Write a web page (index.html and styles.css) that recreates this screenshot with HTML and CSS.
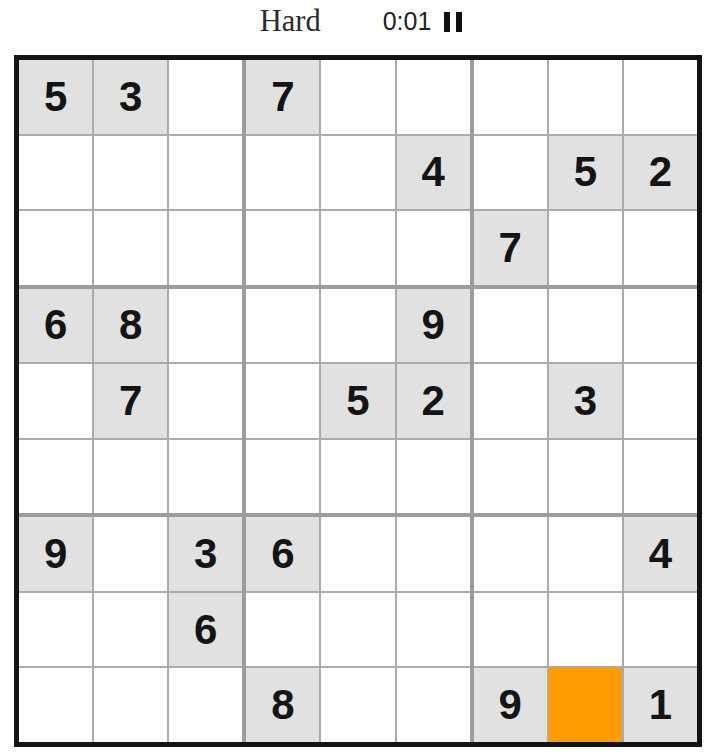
FILE: index.html
```html
<!DOCTYPE html>
<html lang="en">
<head>
<meta charset="utf-8">
<title>Sudoku</title>
<link rel="stylesheet" href="styles.css">
</head>
<body>
<div class="page">
  <header class="header">
    <span class="level">Hard</span>
    <span class="timer">0:01</span>
    <button class="pause" aria-label="Pause"><span class="bar"></span><span class="bar"></span></button>
  </header>
  <div class="board" id="board"></div>
</div>
<script src="app.js"></script>
</body>
</html>
```
FILE: styles.css
```css
html, body {
  margin: 0;
  padding: 0;
  background: #fff;
}
.page {
  width: 720px;
  padding-left: 14px;
  box-sizing: border-box;
}
.header {
  height: 43px;
  margin-bottom: 12px;
  display: flex;
  justify-content: center;
  align-items: center;
  color: #222;
}
.level {
  font-family: "Liberation Serif", "Times New Roman", serif;
  font-size: 30.5px;
  margin-right: 62px;
  margin-left: -12px;
  color: #2a2a2a;
}
.timer {
  font-family: "Liberation Sans", Arial, sans-serif;
  font-size: 25px;
  margin-right: 13px;
  color: #222;
}
.pause {
  display: flex;
  gap: 6px;
  padding: 0;
  margin: 1px 0 0 0;
  border: 0;
  background: none;
  height: 20px;
}
.bar {
  width: 6px;
  height: 20px;
  background: #111;
}
.board {
  box-sizing: border-box;
  width: 688px;
  height: 692px;
  border: 5px solid #141414;
  background: #9c9c9c;
  display: grid;
  grid-template-columns: repeat(3, 1fr);
  grid-template-rows: repeat(3, 1fr);
  gap: 4px;
}
.box {
  display: grid;
  grid-template-columns: repeat(3, 1fr);
  grid-template-rows: repeat(3, 1fr);
  gap: 2px;
  background: #ababab;
}
.cell {
  background: #fff;
  display: flex;
  align-items: center;
  justify-content: center;
  font-family: "Liberation Sans", Arial, sans-serif;
  font-weight: 700;
  font-size: 42px;
  color: #141414;
}
.cell.given {
  background: #e1e1e1;
}
.cell.selected {
  background: #fe9c00;
}
```
FILE: app.js
```js
(function () {
  var grid = [
    "53.7.....",
    ".....4.52",
    "......7..",
    "68...9...",
    ".7..52.3.",
    ".........",
    "9.36....4",
    "..6......",
    "...8..9.1"
  ];
  var board = document.getElementById("board");
  for (var b = 0; b < 9; b++) {
    var box = document.createElement("div");
    box.className = "box";
    var br = Math.floor(b / 3) * 3, bc = (b % 3) * 3;
    for (var i = 0; i < 9; i++) {
      var r = br + Math.floor(i / 3), c = bc + (i % 3);
      var ch = grid[r][c];
      var cell = document.createElement("div");
      cell.className = "cell";
      if (ch !== ".") {
        cell.className += " given";
        cell.textContent = ch;
      }
      if (r === 8 && c === 7) cell.className += " selected";
      box.appendChild(cell);
    }
    board.appendChild(box);
  }
})();
```
